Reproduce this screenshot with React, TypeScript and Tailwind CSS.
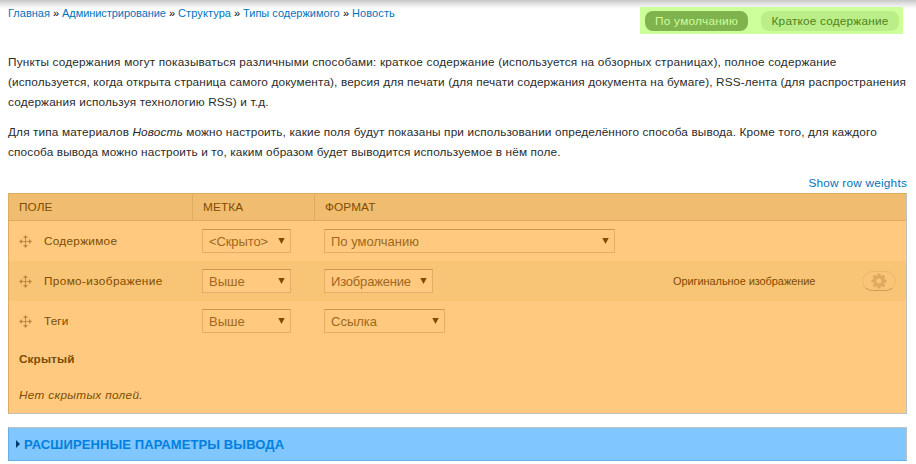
import React from "react";

const crumbs = [
  { label: "Главная", style: "w-[42px]" },
  { label: "Администрирование", style: "w-[104px] tracking-[-0.06px]" },
  { label: "Структура", style: "w-[53px] tracking-[0.1px]" },
  { label: "Типы содержимого", style: "w-[97px]" },
  { label: "Новость", style: "w-[43px] tracking-[0.1px]" },
];

function DragHandle() {
  return (
    <svg width="13" height="13" viewBox="0 0 13 13" fill="#c08a42">
      <path d="M6 1h1v11H6zM1 6h11v1H1z" />
      <path d="M6.5 0L9 3H4zM6.5 13L9 10H4zM0 6.5L3 4v5zM13 6.5L10 4v5z" />
    </svg>
  );
}

function Gear() {
  return (
    <svg width="16" height="16" viewBox="0 0 16 16" fill="none" stroke="#e0a95f">
      <circle cx="8" cy="8" r="4.1" strokeWidth="3.2" />
      <path
        d="M8 .5v3M8 12.5v3M.5 8h3M12.5 8h3M2.6 2.6l2 2M11.4 11.4l2 2M2.6 13.4l2-2M11.4 4.6l2-2"
        strokeWidth="3"
      />
    </svg>
  );
}

function Select({ value, width, spacing }: { value: string; width: string; spacing: string }) {
  return (
    <div
      className={`flex h-6 items-center justify-between border border-[#e3ae65] border-t-[#cc9851] bg-[#ffca80] pl-1.5 pr-[5px] text-[13px] text-[#a0681c] ${width}`}
    >
      <span className={`whitespace-nowrap pt-0.5 ${spacing}`}>{value}</span>
      <svg width="7" height="6" viewBox="0 0 7 6" className="shrink-0">
        <path d="M.3 0h6.4L3.5 6z" fill="#804c00" />
      </svg>
    </div>
  );
}

type RowProps = {
  name: string;
  nameSpacing: string;
  label: string;
  labelSpacing: string;
  format: string;
  formatWidth: string;
  formatSpacing: string;
  shade?: boolean;
  children?: React.ReactNode;
};

function Row(p: RowProps) {
  return (
    <div className={`flex h-10 items-center ${p.shade ? "bg-[#f8c577]" : ""}`}>
      <div className="flex w-[193px] shrink-0 items-center gap-3 pl-2.5">
        <DragHandle />
        <span className={`whitespace-nowrap ${p.nameSpacing}`}>{p.name}</span>
      </div>
      <div className="w-[122px] shrink-0">
        <Select value={p.label} width="w-[89px]" spacing={p.labelSpacing} />
      </div>
      <Select value={p.format} width={p.formatWidth} spacing={p.formatSpacing} />
      {p.children}
    </div>
  );
}

export default function App() {
  return (
    <div className="h-[464px] w-[916px] overflow-hidden bg-white bg-[linear-gradient(#c4c4c4_0px,#cfcfcf_1px,#e4e4e4_4px,#fafafa_8px,#fff_10px)] bg-[length:100%_10px] bg-no-repeat font-['Liberation_Sans',Arial,sans-serif] text-[11.8px] leading-5 text-[#2b2b2b]">
      <header className="flex h-[52px] items-start justify-between pl-2 pr-[13px]">
        <nav className="flex pt-[3px] text-[11px] leading-5">
          {crumbs.map((c, i) => (
            <React.Fragment key={c.label}>
              {i > 0 && <span className="w-3 text-center text-black">»</span>}
              <a className={`whitespace-nowrap text-[#0074bd] ${c.style}`}>{c.label}</a>
            </React.Fragment>
          ))}
        </nav>
        <div className="mt-[7px] flex h-[27px] w-[263px] items-center gap-[13px] bg-[#cdff9a] pl-[5px]">
          <span className="flex h-5 w-[103px] items-center justify-center whitespace-nowrap rounded-lg bg-[#80b24d] tracking-[0.28px] text-[#cdff9a]">
            По умолчанию
          </span>
          <span className="flex h-5 w-[138px] items-center justify-center whitespace-nowrap rounded-lg bg-[#bbee88] tracking-[0.2px] text-[#4f821c]">
            Краткое содержание
          </span>
        </div>
      </header>

      <main className="px-2">
        <p className="mb-2.5 whitespace-nowrap">
          <span className="block tracking-[0.18px]">Пункты содержания могут показываться различными способами: краткое содержание (используется на обзорных страницах), полное содержание</span>
          <span className="block tracking-[0.122px]">(используется, когда открыта страница самого документа), версия для печати (для печати содержания документа на бумаге), RSS-лента (для распространения</span>
          <span className="block tracking-[0.15px]">содержания используя технологию RSS) и т.д.</span>
        </p>
        <p className="mb-[11px] whitespace-nowrap">
          <span className="block tracking-[0.13px]">Для типа материалов <em>Новость</em> можно настроить, какие поля будут показаны при использовании определённого способа вывода. Кроме того, для каждого</span>
          <span className="block tracking-[0.125px]">способа вывода можно настроить и то, каким образом будет выводится используемое в нём поле.</span>
        </p>
        <div className="flex justify-end pr-px tracking-[0.22px] text-[#0074bd]">
          <a>Show row weights</a>
        </div>

        <section className="h-[221px] w-[899px] border border-[#dfab61] border-b-[#bebfc0] border-r-[#bebfc0] bg-[#ffca80] text-[#804c00]">
          <div className="flex h-[27px] border-b border-[#dfab61] bg-[#f0bc70] leading-[27px] tracking-[0.1px]">
            <div className="w-[184px] border-r border-[#dfab61] pl-2.5">ПОЛЕ</div>
            <div className="w-[122px] border-r border-[#dfab61] pl-2.5">МЕТКА</div>
            <div className="pl-2.5">ФОРМАТ</div>
          </div>
          <Row name="Содержимое" nameSpacing="tracking-[0.27px]" label="<Скрыто>" labelSpacing="tracking-[-0.1px]" format="По умолчанию" formatWidth="w-[291px]" formatSpacing="" />
          <Row name="Промо-изображение" nameSpacing="tracking-[0.35px]" label="Выше" labelSpacing="" format="Изображение" formatWidth="w-[109px]" formatSpacing="tracking-[-0.18px]" shade>
            <span className="ml-auto mr-[47px] w-[142px] whitespace-nowrap text-[11px] tracking-[-0.08px]">Оригинальное изображение</span>
            <div className="mr-2.5 flex h-5 w-[34px] items-center justify-center rounded-full border border-[#edb96d] border-b-[#d39d53]">
              <Gear />
            </div>
          </Row>
          <Row name="Теги" nameSpacing="tracking-[0.1px]" label="Выше" labelSpacing="" format="Ссылка" formatWidth="w-[121px]" formatSpacing="" />
          <div className="h-9 pl-2.5 font-bold leading-9 tracking-[0.1px]">Скрытый</div>
          <div className="h-9 pl-2.5 italic leading-9 tracking-[0.31px]">Нет скрытых полей.</div>
        </section>

        <section className="mt-[13px] flex h-[34px] w-[899px] items-center border border-[#61b0ed] border-r-[#bebfc0] border-t-[#bebfc0] bg-[#80c6ff] pl-[7px] text-[13px] font-bold text-[#0080dd]">
          <svg width="4" height="8" viewBox="0 0 4 8" className="mr-1">
            <path d="M0 0l4 4-4 4z" fill="#003a70" />
          </svg>
          <span className="whitespace-nowrap pt-0.5 tracking-[0.1px]">РАСШИРЕННЫЕ ПАРАМЕТРЫ ВЫВОДА</span>
        </section>
      </main>
    </div>
  );
}
